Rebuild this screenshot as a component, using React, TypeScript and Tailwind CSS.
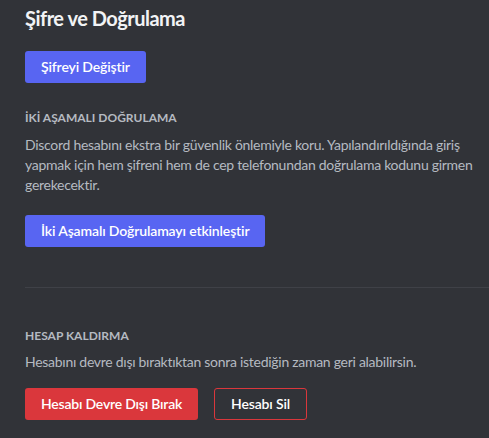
export default function App() {
  return (
    <div className="min-h-screen w-full bg-[#313338] pl-[25px] font-['Lato',sans-serif] antialiased">
      <div className="flex flex-col items-start pt-[6px]">
        <h2 className="text-[20px] leading-[24px] font-bold tracking-[-0.025em] text-[#f2f3f5]">
          Şifre ve Doğrulama
        </h2>
        <button className="mt-[21px] h-8 rounded-[3px] bg-[#5865f2] px-4 text-[14px] font-semibold leading-4 tracking-[-0.01em] text-white">
          Şifreyi Değiştir
        </button>

        <h3 className="mt-[27px] text-[12px] leading-4 font-bold uppercase text-[#b5bac1]">
          İKİ AŞAMALI DOĞRULAMA
        </h3>
        <p className="mt-[9px] w-full text-[14px] leading-5 tracking-[-0.02em] text-[#b5bac1]">
          Discord hesabını ekstra bir güvenlik önlemiyle koru. Yapılandırıldığında giriş yapmak için hem şifreni hem de cep telefonundan doğrulama kodunu girmen gerekecektir.
        </p>
        <button className="mt-5 h-8 rounded-[3px] bg-[#5865f2] px-4 text-[14px] font-semibold leading-4 tracking-[-0.01em] text-white">
          İki Aşamalı Doğrulamayı etkinleştir
        </button>

        <div className="mt-10 h-px w-full bg-[#3f4147]" />

        <h3 className="mt-10 text-[12px] leading-4 font-bold uppercase text-[#b5bac1]">
          HESAP KALDIRMA
        </h3>
        <p className="mt-2 text-[14px] leading-5 tracking-[-0.02em] text-[#b5bac1]">
          Hesabını devre dışı bıraktıktan sonra istediğin zaman geri alabilirsin.
        </p>
        <div className="mt-4 flex gap-4">
          <button className="h-8 rounded-[3px] bg-[#da373c] px-4 text-[14px] font-semibold leading-4 tracking-[-0.015em] text-white">
            Hesabı Devre Dışı Bırak
          </button>
          <button className="h-8 rounded-[3px] border border-[#da373c] bg-transparent px-4 text-[14px] font-semibold leading-4 tracking-[-0.01em] text-white">
            Hesabı Sil
          </button>
        </div>
      </div>
    </div>
  );
}
